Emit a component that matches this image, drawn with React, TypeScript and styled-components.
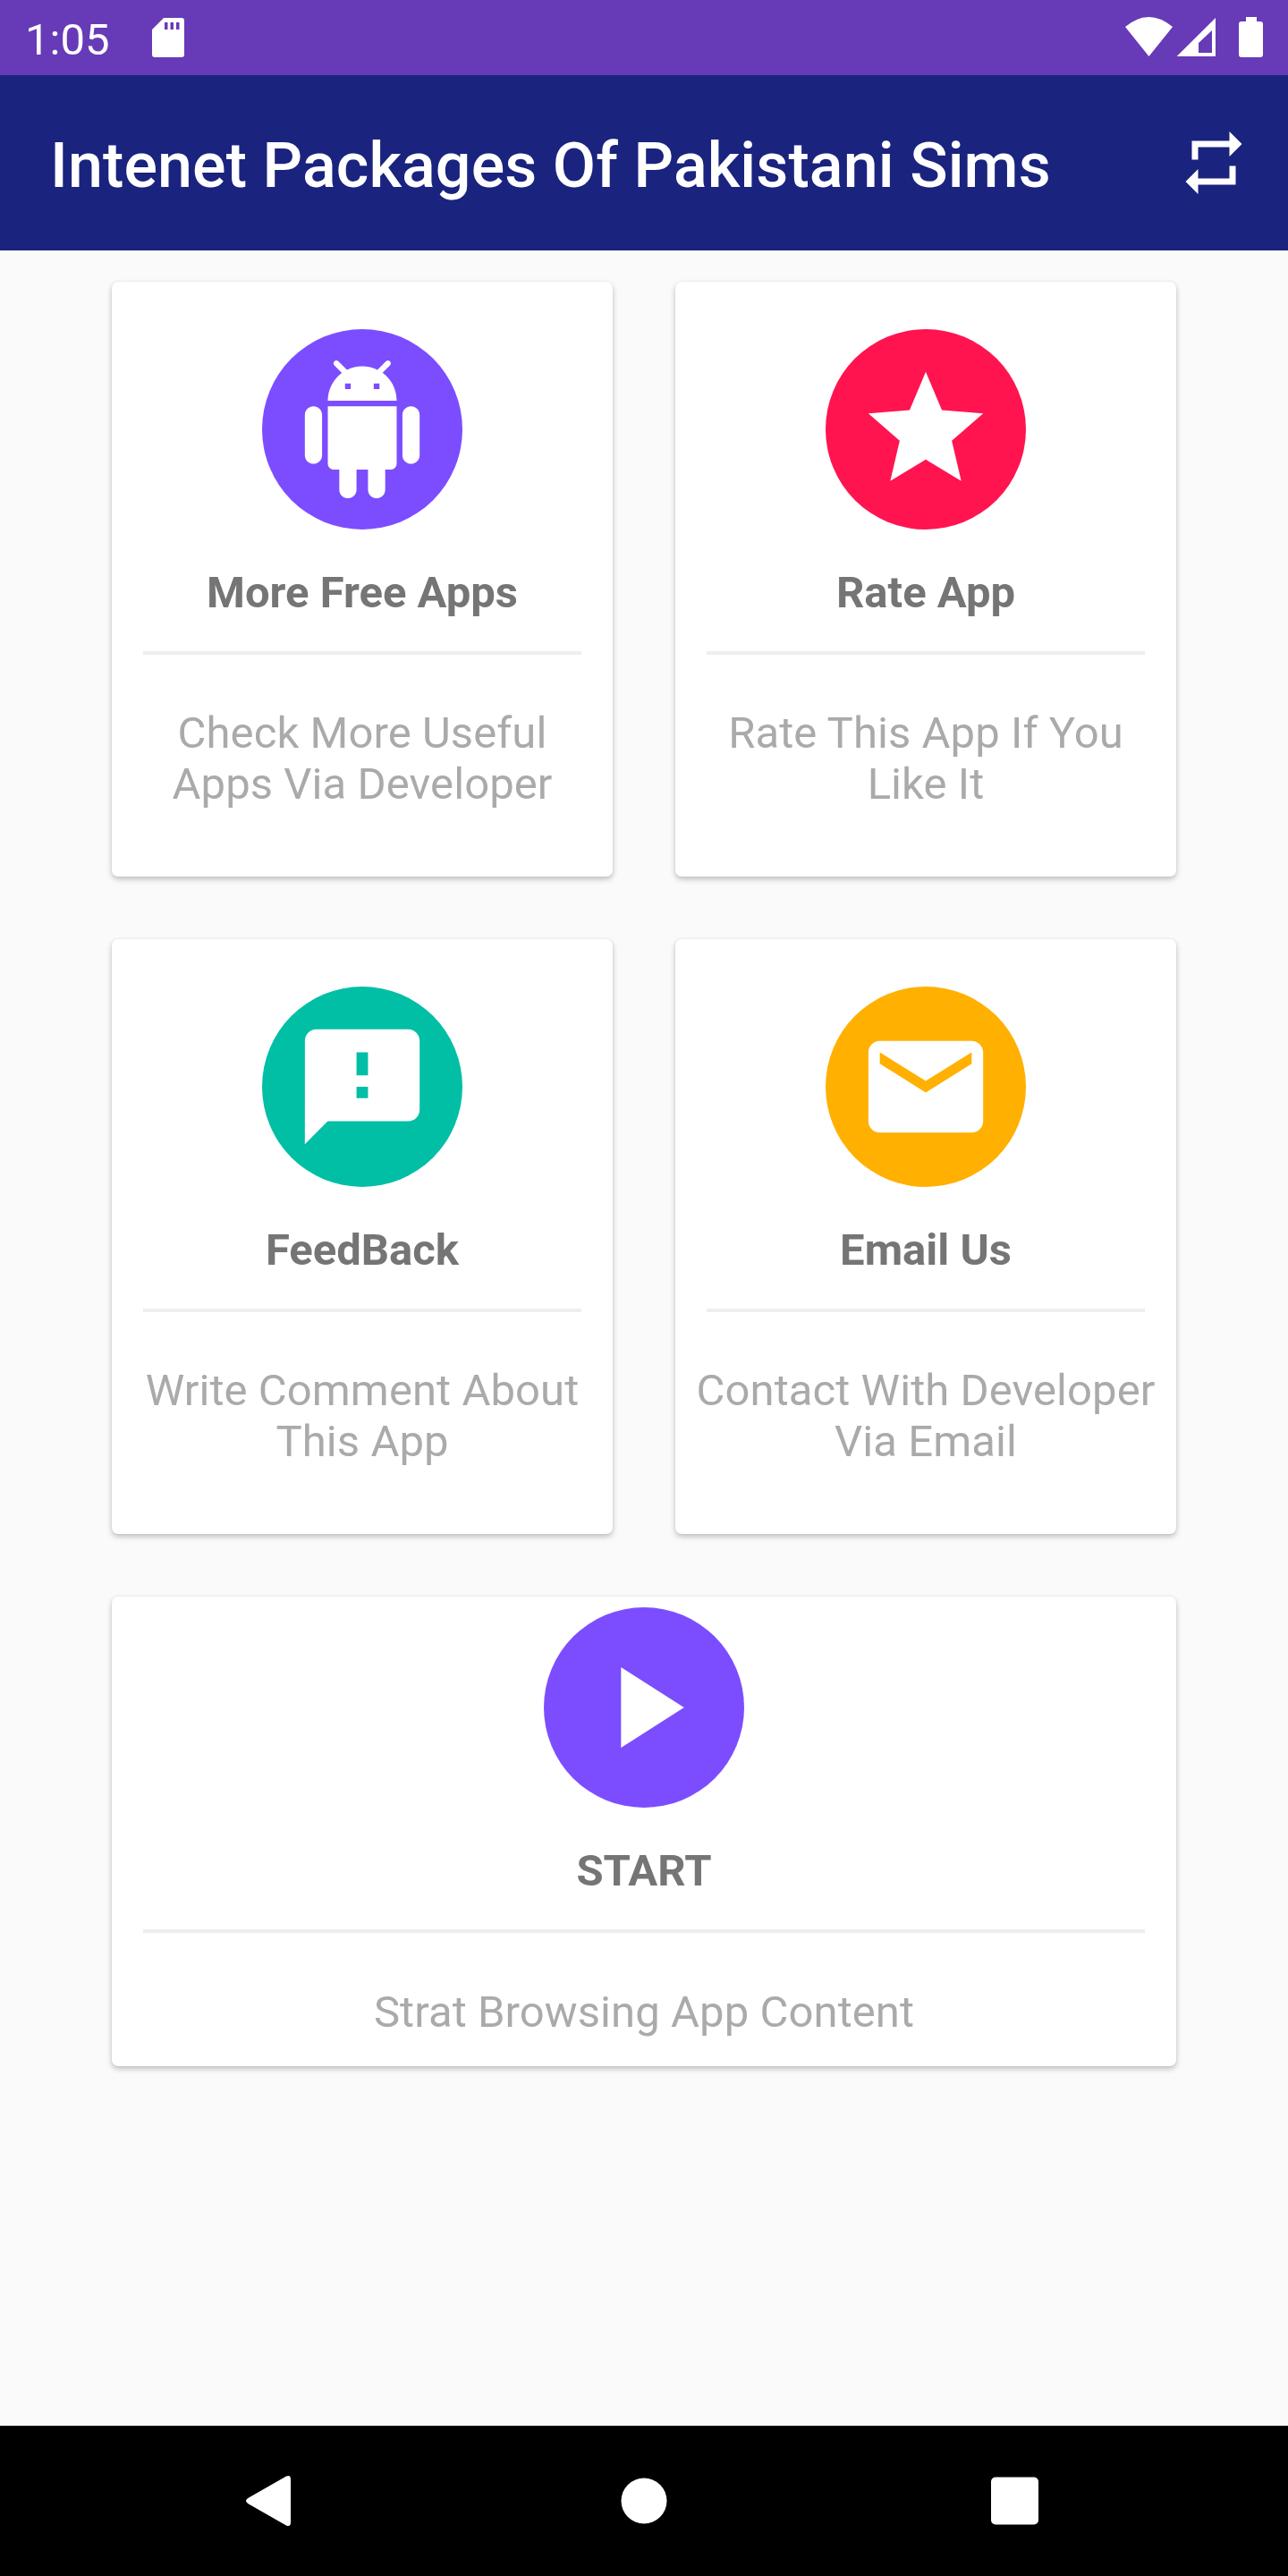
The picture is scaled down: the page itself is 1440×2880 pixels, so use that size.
import React from "react";
import styled, { createGlobalStyle } from "styled-components";

const Global = createGlobalStyle`
  html, body { margin: 0; padding: 0; background: #fafafa; }
  * { box-sizing: border-box; }
`;

const Screen = styled.div`
  width: 1440px;
  height: 2880px;
  display: flex;
  flex-direction: column;
  background: #fafafa;
  font-family: Roboto, "Liberation Sans", sans-serif;
  overflow: hidden;
`;

const StatusBar = styled.div`
  height: 84px;
  flex: none;
  background: #673ab7;
  display: flex;
  align-items: center;
  justify-content: space-between;
  padding: 0 28px 0 28px;
  color: #fff;
`;

const StatusGroup = styled.div`
  display: flex;
  align-items: center;
  gap: ${(p: { $gap: number }) => p.$gap}px;
`;

const Clock = styled.span`
  margin-top: 4px;
  font-size: 49px;
  line-height: 57px;
  font-weight: 400;
`;

const AppBar = styled.header`
  height: 196px;
  flex: none;
  background: #1a237e;
  display: flex;
  align-items: center;
  justify-content: space-between;
  padding: 0 41px 0 56px;
  color: #fff;
`;

const AppTitle = styled.h1`
  margin: 6px 0 0;
  font-size: 70px;
  line-height: 82px;
  font-weight: 500;
  letter-spacing: 0.1px;
`;

const Content = styled.main`
  flex: 1;
  display: grid;
  grid-template-columns: 560px 560px;
  grid-auto-rows: max-content;
  gap: 70px;
  padding: 35px 125px 0;
`;

const Card = styled.section<{ $wide?: boolean }>`
  grid-column: ${(p) => (p.$wide ? "1 / span 2" : "auto")};
  height: ${(p) => (p.$wide ? 525 : 665)}px;
  padding-top: ${(p) => (p.$wide ? 12 : 53)}px;
  background: #fff;
  border-radius: 7px;
  box-shadow: 0 3px 6px rgba(0, 0, 0, 0.24), 0 0 2px rgba(0, 0, 0, 0.08);
  display: flex;
  flex-direction: column;
  align-items: center;
`;

const Badge = styled.div<{ $color: string }>`
  width: 224px;
  height: 224px;
  flex: none;
  border-radius: 50%;
  background: ${(p) => p.$color};
  display: flex;
  align-items: center;
  justify-content: center;
  color: #fff;
`;

const Title = styled.h2`
  margin: 42px 0 0;
  font-size: 49px;
  line-height: 57px;
  font-weight: 700;
  color: #757575;
  text-align: center;
`;

const Divider = styled.div`
  width: calc(100% - 70px);
  height: 4px;
  margin-top: 37px;
  flex: none;
  background: #eeeeee;
`;

const Description = styled.p<{ $wide?: boolean }>`
  margin: ${(p) => (p.$wide ? 60 : 59)}px 0 0;
  font-size: 49px;
  line-height: 57px;
  font-weight: 400;
  letter-spacing: 0.08px;
  color: #aaaaaa;
  text-align: center;
  white-space: pre-line;
`;

const NavBar = styled.nav`
  height: 168px;
  flex: none;
  background: #000;
  display: flex;
  align-items: center;
  justify-content: center;
  gap: 336px;
  color: #fff;
`;

const Icon = ({ d, size = 154 }: { d: string; size?: number }) => (
  <svg width={size} height={size} viewBox="0 0 24 24" fill="currentColor">
    <path fillRule="evenodd" d={d} />
  </svg>
);

const paths = {
  android:
    "M6 18c0 .55.45 1 1 1h1v3.5c0 .83.67 1.5 1.5 1.5s1.5-.67 1.5-1.5V19h2v3.5c0 .83.67 1.5 1.5 1.5s1.5-.67 1.5-1.5V19h1c.55 0 1-.45 1-1V8H6v10zM3.5 8C2.67 8 2 8.67 2 9.5v7c0 .83.67 1.5 1.5 1.5S5 17.33 5 16.5v-7C5 8.67 4.33 8 3.5 8zm17 0c-.83 0-1.5.67-1.5 1.5v7c0 .83.67 1.5 1.5 1.5s1.5-.67 1.5-1.5v-7c0-.83-.67-1.5-1.5-1.5zm-4.97-5.84l1.3-1.3c.2-.2.2-.51 0-.71-.2-.2-.51-.2-.71 0l-1.48 1.48C13.85 1.23 12.95 1 12 1c-.96 0-1.86.23-2.66.63L7.85.15c-.2-.2-.51-.2-.71 0-.2.2-.2.51 0 .71l1.31 1.31C6.97 3.26 6 5.01 6 7h12c0-1.99-.97-3.75-2.47-4.84zM10 5H9V4h1v1zm5 0h-1V4h1v1z",
  star: "M12 17.27L18.18 21l-1.64-7.03L22 9.24l-7.19-.61L12 2 9.19 8.63 2 9.24l5.46 4.73L5.82 21z",
  feedback:
    "M20 2H4c-1.1 0-1.99.9-1.99 2L2 22l4-4h14c1.1 0 2-.9 2-2V4c0-1.1-.9-2-2-2zm-7 12h-2v-2h2v2zm0-4h-2V6h2v4z",
  email:
    "M20 4H4c-1.1 0-1.99.9-1.99 2L2 18c0 1.1.9 2 2 2h16c1.1 0 2-.9 2-2V6c0-1.1-.9-2-2-2zm0 4l-8 5-8-5V6l8 5 8-5v2z",
  play: "M8 5v14l11-7z",
  repeat:
    "M7 7h10v3l4-4-4-4v3H5v6h2V7zm10 10H7v-3l-4 4 4 4v-3h12v-6h-2v4z",
};

const cards = [
  { icon: paths.android, color: "#7c4dff", title: "More Free Apps", text: "Check More Useful\nApps Via Developer" },
  { icon: paths.star, color: "#ff1450", title: "Rate App", text: "Rate This App If You\nLike It" },
  { icon: paths.feedback, color: "#00bfa5", title: "FeedBack", text: "Write Comment About\nThis App" },
  { icon: paths.email, color: "#ffb000", title: "Email Us", text: "Contact With Developer\nVia Email" },
];

export default function App() {
  return (
    <Screen>
      <Global />
      <StatusBar>
        <StatusGroup $gap={48}>
          <Clock>1:05</Clock>
          <svg width="36" height="44" viewBox="0 0 36 44" fill="#fff">
            <path
              fillRule="evenodd"
              d="M13 0H33a3 3 0 0 1 3 3V41a3 3 0 0 1-3 3H3a3 3 0 0 1-3-3V13ZM14 5v8h3.5V5Zm6.5 0v8H24V5Zm6.5 0v8h3.5V5Z"
            />
          </svg>
        </StatusGroup>
        <StatusGroup $gap={0}>
          <svg width="154" height="46" viewBox="0 0 154 46" fill="#fff">
            <path d="M0 11 Q26.5 -11 53 11 L26.5 44Z" />
            <path fillRule="evenodd" d="M57.7 44 L101 1V44ZM82 29 L97 15V40H82Z" />
            <path d="M127 8a3 3 0 0 1 3-3H135V0H147V5H151a3 3 0 0 1 3 3V42a3 3 0 0 1-3 3H130a3 3 0 0 1-3-3Z" />
          </svg>
        </StatusGroup>
      </StatusBar>
      <AppBar>
        <AppTitle>Intenet Packages Of Pakistani Sims</AppTitle>
        <Icon d={paths.repeat} size={84} />
      </AppBar>
      <Content>
        {cards.map((c) => (
          <Card key={c.title}>
            <Badge $color={c.color}>
              <Icon d={c.icon} />
            </Badge>
            <Title>{c.title}</Title>
            <Divider />
            <Description>{c.text}</Description>
          </Card>
        ))}
        <Card $wide>
          <Badge $color="#7c4dff">
            <Icon d={paths.play} />
          </Badge>
          <Title>START</Title>
          <Divider />
          <Description $wide>Strat Browsing App Content</Description>
        </Card>
      </Content>
      <NavBar>
        <svg width="84" height="84" viewBox="0 0 84 84" fill="#fff">
          <path d="M20 38.5 L62 14.5 Q67 12.5 67 18 V66 Q67 71.5 62 69.5 L20 45.5 Q14 42 20 38.5Z" />
        </svg>
        <svg width="84" height="84" viewBox="0 0 84 84" fill="#fff">
          <circle cx="42" cy="42" r="25.5" />
        </svg>
        <svg width="84" height="84" viewBox="0 0 84 84" fill="#fff">
          <rect x="10" y="15.5" width="53" height="53" rx="5" />
        </svg>
      </NavBar>
    </Screen>
  );
}
